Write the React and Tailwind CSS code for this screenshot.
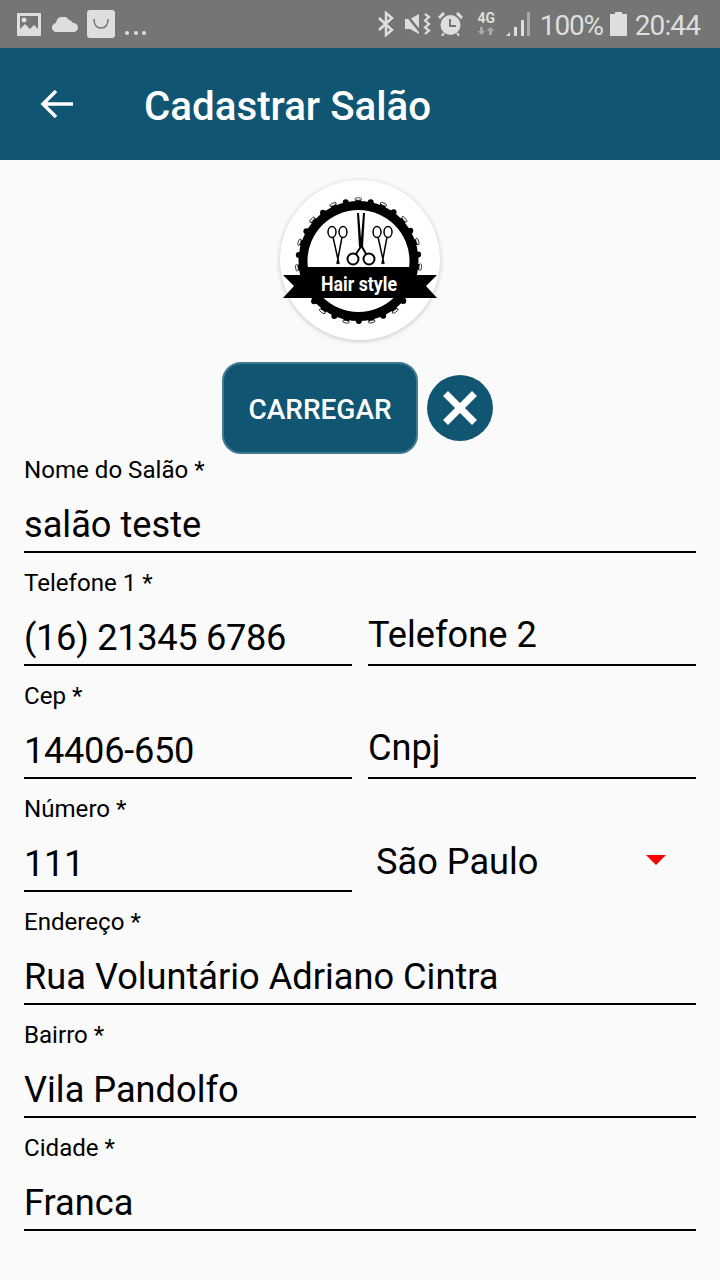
import React from 'react';

const Field = ({ label, value, digits }) => (
  <div className="h-[113px] flex flex-col">
    <div className="h-[14px]" />
    <label className="h-[32px] text-[24.100px] leading-[32px] text-black">{label}</label>
    <div className={`flex-1 pt-[18px] text-[36.200px] leading-[42px] text-black ${digits ? 'tracking-[-0.3px]' : ''}`}>{value}</div>
    <div className="h-[2px] bg-black" />
  </div>
);

const Placeholder = ({ value }) => (
  <div className="h-[113px] flex flex-col">
    <div className="flex-1 flex items-end pb-[8px] text-[36.200px] leading-[42px] text-black">{value}</div>
    <div className="h-[2px] bg-black" />
  </div>
);

const StatusBar = () => (
  <div className="h-[48px] bg-[#757575] flex items-center justify-between pl-[17px] pr-[20px] text-[#dedede]">
    <div className="flex items-center">
      <svg width="24" height="23" viewBox="0 0 24 23" fill="currentColor">
        <path fillRule="evenodd" d="M1 0h22a1 1 0 0 1 1 1v21a1 1 0 0 1-1 1H1a1 1 0 0 1-1-1V1a1 1 0 0 1 1-1zM3 3v13l5-5 5 5 4-4 4 4V3zM7 4.500a2.500 2.500 0 1 1 0 5 2.500 2.500 0 0 1 0-5z" />
      </svg>
      <svg className="ml-[11px]" width="26" height="15" viewBox="0 0 26 15" fill="currentColor">
        <path d="M5 15a4.500 4.500 0 0 1-1-9 7 7 0 0 1 13-3 5 5 0 0 1 4 3 4.500 4.500 0 0 1 1 9z" />
      </svg>
      <div className="ml-[9px] w-[28px] h-[28px] rounded-[3px] bg-[#dedede] flex items-center justify-center">
        <svg width="18" height="12" viewBox="0 0 18 12" fill="none" stroke="#757575" strokeWidth="1.500">
          <path d="M2 1c0 6 3 9 7 9s7-3 7-9" />
        </svg>
      </div>
      <div className="ml-[10px] mt-[18px] flex gap-[4.500px]">
        <span className="w-[4px] h-[4px] rounded-full bg-[#dedede]" />
        <span className="w-[4px] h-[4px] rounded-full bg-[#dedede]" />
        <span className="w-[4px] h-[4px] rounded-full bg-[#dedede]" />
      </div>
    </div>
    <div className="flex items-center">
      <svg width="16" height="26" viewBox="0 0 16 26" fill="none" stroke="currentColor" strokeWidth="2.500">
        <path d="M1 7l13 12-6 5V2l6 5L1 19" />
      </svg>
      <svg className="ml-[11px]" width="26" height="22" viewBox="0 0 26 22" fill="currentColor">
        <path d="M0 6h5l9-5v20l-9-5-5 0z" />
        <path d="M0 0l17 21" stroke="#757575" strokeWidth="2.500" />
        <path d="M20 1l4 3-4 3.500 4 3.500-4 3.500 4 3-4 3.500" fill="none" stroke="currentColor" strokeWidth="2.200" />
      </svg>
      <svg className="ml-[7px]" width="25" height="24" viewBox="0 0 25 24" fill="currentColor">
        <circle cx="12.500" cy="13" r="10" />
        <path d="M12 7v7h6" fill="none" stroke="#757575" strokeWidth="2" />
        <path d="M1 6l5-5M24 6l-5-5" fill="none" stroke="currentColor" strokeWidth="3" />
        <path d="M6 21l-2 3M19 21l2 3" fill="none" stroke="currentColor" strokeWidth="2" />
      </svg>
      <div className="ml-[14px] w-[19px] h-[24px] flex flex-col items-center">
        <span className="text-[14px] leading-[13px] font-bold">4G</span>
        <svg className="mt-[2px]" width="16" height="8" viewBox="0 0 16 8" fill="#a8a8a8">
          <path d="M2 0h3v4h2.500L3.500 8-.5 4H2zM11 8V4H8.500l4-4 4 4H14v4z" />
        </svg>
      </div>
      <svg className="ml-[10px]" width="24" height="24" viewBox="0 0 24 24" fill="currentColor">
        <path d="M0 24l4-4v4z" />
        <path d="M8 15h3v9H8zM15 8h3v16h-3z" />
        <path d="M21 0h3v24h-3z" fill="#a8a8a8" />
      </svg>
      <span className="ml-[10px] mt-[3px] text-[28px] leading-[34px] tracking-[-1.2px]">100%</span>
      <svg className="ml-[7px]" width="17" height="24" viewBox="0 0 17 24" fill="currentColor">
        <path d="M5 0h7v2h5v22H0V2h5z" />
      </svg>
      <span className="ml-[8px] mt-[3px] text-[28px] leading-[34px] tracking-[-0.9px]">20:44</span>
    </div>
  </div>
);

// scalloped edge of the badge
const bumps = Array.from({ length: 30 }, (_, i) => {
  const a = (i / 30) * Math.PI * 2 + 0.1;
  return {
    x: 78.5 + Math.cos(a) * 60,
    y: 81 + Math.sin(a) * 60,
    lx: 78.5 + Math.cos(a) * 62,
    ly: 81 + Math.sin(a) * 62,
    loop: i % 2 === 0,
    deg: (a * 180) / Math.PI + 90,
  };
});

const Logo = () => (
  <div className="w-[160px] h-[160px] rounded-full bg-white shadow-[0_1px_5px_rgba(0,0,0,0.22)]">
    <svg width="160" height="160" viewBox="0 0 160 160">
      <circle cx="78.500" cy="81" r="60" fill="#000" />
      {bumps.map((b, i) => (
        <g key={i}>
          <circle cx={b.x} cy={b.y} r="3" fill="#000" />
          {b.loop && (
            <ellipse
              cx={b.lx}
              cy={b.ly}
              rx="3.500"
              ry="1.300"
              fill="#fff"
              stroke="#000"
              strokeWidth="0.700"
              transform={`rotate(${b.deg} ${b.lx} ${b.ly})`}
            />
          )}
        </g>
      ))}
      <clipPath id="dome">
        <rect x="0" y="0" width="160" height="87" />
      </clipPath>
      <clipPath id="crescent">
        <rect x="0" y="117" width="160" height="43" />
      </clipPath>
      <circle cx="78.500" cy="81" r="51" fill="#fff" clipPath="url(#dome)" />
      <circle cx="78.500" cy="81" r="51" fill="#fff" clipPath="url(#crescent)" />
      <path d="M3 95h24v-3h103v3h27l-11 11 11 12H3l11-12z" fill="#000" />
      <g fill="none" stroke="#000" strokeWidth="1.500">
        <ellipse cx="52" cy="52" rx="4" ry="5.500" />
        <ellipse cx="63" cy="52" rx="4" ry="5.500" />
        <path d="M53 57l6 27M62 57l-5 27" />
        <ellipse cx="97" cy="52" rx="4" ry="5.500" />
        <ellipse cx="108" cy="52" rx="4" ry="5.500" />
        <path d="M98 57l6 27M107 57l-5 27" />
        <circle cx="73" cy="79" r="5.500" strokeWidth="2" />
        <circle cx="89" cy="79" r="5.500" strokeWidth="2" />
        <path d="M76 74l6-9M86 74l-5-9" strokeWidth="2" />
      </g>
      <path d="M77 33h2l2 25 2-25h2l-2 34h-4z" fill="#000" />
      <text x="79" y="111" textAnchor="middle" fill="#fff" fontSize="20" fontWeight="700" fontFamily="Roboto, sans-serif" textLength="76" lengthAdjust="spacingAndGlyphs">Hair style</text>
    </svg>
  </div>
);

export default function App() {
  return (
    <div className="w-[720px] h-[1280px] bg-[#fafafa] font-['Roboto',sans-serif] overflow-hidden">
      <StatusBar />
      <header className="h-[112px] bg-[#105672] flex items-center text-white">
        <svg className="ml-[40px]" width="33" height="32" viewBox="0 0 33 32" fill="none" stroke="#fff" strokeWidth="3.500">
          <path d="M33 16H3M16 3L3 16l13 13" />
        </svg>
        <h1 className="ml-[71px] mt-[6px] text-[40.300px] leading-[46px] font-medium">Cadastrar Salão</h1>
      </header>

      <div className="pt-[20px] flex justify-center">
        <Logo />
      </div>

      <div className="mt-[22px] pl-[222px] flex items-center h-[92px]">
        <button className="w-[196px] h-[92px] pt-[4px] rounded-[19px] bg-[#105672] border-2 border-[#3f7a92] text-white text-[28px] font-medium">
          CARREGAR
        </button>
        <div className="ml-[9px] -mt-[1px] w-[66px] h-[66px] rounded-full bg-[#105672] flex items-center justify-center">
          <svg width="34" height="34" viewBox="0 0 34 34" stroke="#fff" strokeWidth="7">
            <path d="M2.500 2.500l29 29M31.500 2.500l-29 29" />
          </svg>
        </div>
      </div>

      <div className="px-[24px] -mt-[14px]">
        <Field label="Nome do Salão *" value="salão teste" />
        <div className="grid grid-cols-2 gap-x-[16px]">
          <Field label="Telefone 1 *" value="(16) 21345 6786" digits />
          <Placeholder value="Telefone 2" />
          <Field label="Cep *" value="14406-650" digits />
          <Placeholder value="Cnpj" />
          <Field label="Número *" value="111" digits />
          <div className="h-[113px] flex items-end pb-[9px] pl-[8px] pr-[30px] justify-between">
            <span className="text-[36.200px] leading-[42px] text-black">São Paulo</span>
            <span className="mb-[18px] w-0 h-0 border-x-[10px] border-x-transparent border-t-[10px] border-t-[#ff0000]" />
          </div>
        </div>
        <Field label="Endereço *" value="Rua Voluntário Adriano Cintra" />
        <Field label="Bairro *" value="Vila Pandolfo" />
        <Field label="Cidade *" value="Franca" />
      </div>
    </div>
  );
}
